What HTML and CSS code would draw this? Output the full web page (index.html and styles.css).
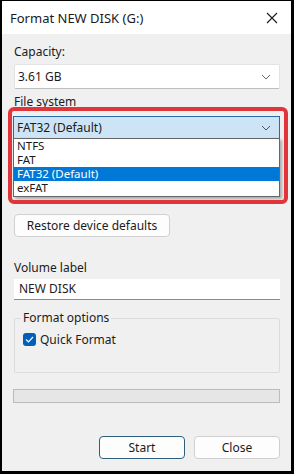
FILE: index.html
```html
<!DOCTYPE html>
<html>
<head>
  <link rel="stylesheet" href="styles.css">
</head>
<body>
  <div class="window">
    <div class="titlebar">
      <span class="title">Format NEW DISK (G:)</span>
      <svg class="close" width="12" height="12" viewBox="0 0 12 12">
        <path d="M1 1 L11 11 M11 1 L1 11" stroke="#1a1a1a" stroke-width="1.1" fill="none"/>
      </svg>
    </div>

    <div class="content">
      <label class="field-label capacity-label">Capacity:</label>
      <div class="select">
        <span>3.61 GB</span>
        <svg class="chevron" width="10" height="6" viewBox="0 0 10 6">
          <path d="M1 1 L5 5 L9 1" stroke="#666" stroke-width="1" fill="none"/>
        </svg>
      </div>

      <label class="field-label fs-label">File system</label>
      <div class="combo-wrap">
        <div class="select open">
          <span>FAT32 (Default)</span>
          <svg class="chevron" width="10" height="6" viewBox="0 0 10 6">
            <path d="M1 1 L5 5 L9 1" stroke="#555" stroke-width="1" fill="none"/>
          </svg>
        </div>
        <ul class="dropdown">
          <li>NTFS</li>
          <li>FAT</li>
          <li class="selected">FAT32 (Default)</li>
          <li>exFAT</li>
        </ul>
        <div class="highlight"></div>
      </div>

      <button class="btn restore">Restore device defaults</button>

      <label class="field-label volume-label">Volume label</label>
      <div class="textbox">NEW DISK</div>

      <fieldset class="group">
        <legend>Format options</legend>
        <label class="check">
          <span class="box">
            <svg width="9" height="7" viewBox="0 0 9 7">
              <path d="M1 3.5 L3.5 6 L8 1" stroke="#fff" stroke-width="1.2" fill="none"/>
            </svg>
          </span>
          Quick Format
        </label>
      </fieldset>

      <div class="progress"></div>

      <div class="actions">
        <button class="btn primary">Start</button>
        <button class="btn">Close</button>
      </div>
    </div>
  </div>
</body>
</html>
```
FILE: styles.css
```css
body {
  margin: 0;
  font-family: 'Noto Sans', 'Open Sans', sans-serif;
  font-size: 12px;
  color: #1b1b1b;
  background: #000;
}

.window {
  width: 289px;
  height: 470px;
  border-left: 2px solid #000;
  border-top: 1px solid #000;
  background: #f0f0f0;
  overflow: hidden;
}

.titlebar {
  height: 33px;
  background: #fff;
  display: flex;
  align-items: center;
  justify-content: space-between;
  padding: 0 13px 0 8px;
}

.title {
  font-size: 13px;
  color: #1a1a1a;
}

.content {
  padding: 0 11px 0 12px;
}

.field-label {
  display: block;
  height: 16px;
  line-height: 16px;
}

.capacity-label {
  margin-top: 10px;
  margin-bottom: 4px;
}

.select {
  height: 23px;
  background: #fff;
  border: 1px solid #e3e3e3;
  border-bottom-color: #bdbdbd;
  border-radius: 2px;
  display: flex;
  align-items: center;
  justify-content: space-between;
  padding: 0 8px 0 3px;
}

.fs-label {
  margin-top: 5px;
}

.combo-wrap {
  position: relative;
  margin-top: 6px;
}

.select.open {
  height: 21px;
  background: #cde4f7;
  border: 1px solid #2a6aa8;
  border-radius: 0;
  margin-left: -1px;
  padding-left: 3px;
}

.dropdown {
  position: absolute;
  left: -1px;
  right: 0;
  top: 22px;
  margin: 0;
  padding: 0 0 1px 0;
  list-style: none;
  background: #fff;
  border: 1px solid #666;
  box-shadow: 2px 2px 3px rgba(0, 0, 0, 0.3);
  z-index: 2;
}

.dropdown li {
  height: 14px;
  line-height: 14px;
  padding-left: 3px;
  font-size: 11.5px;
}

.dropdown li.selected {
  background: #0078d7;
  color: #fff;
}

.highlight {
  position: absolute;
  left: -6px;
  right: -8px;
  top: -9px;
  height: 89px;
  border: 4px solid #e0353b;
  border-radius: 6px;
  z-index: 3;
}

.btn {
  font-family: inherit;
  font-size: 12px;
  color: #1b1b1b;
  background: #fdfdfd;
  border: 1px solid #d0d0d0;
  border-radius: 4px;
  height: 23px;
  padding: 0;
}

.restore {
  margin-top: 75px;
  width: 156px;
  display: block;
}

.volume-label {
  margin-top: 23px;
  margin-bottom: 3px;
}

.textbox {
  height: 20px;
  line-height: 20px;
  background: #fff;
  border-bottom: 1px solid #8a8a8a;
  padding-left: 5px;
}

.group {
  margin: 11px 0 0 0;
  padding: 6px 8px 0 8px;
  height: 54px;
  border: 1px solid #dcdcdc;
  border-radius: 2px;
}

.group legend {
  padding: 0 2px;
  margin-left: -2px;
  line-height: 14px;
}

.check {
  display: flex;
  align-items: center;
  gap: 4px;
}

.box {
  width: 13px;
  height: 13px;
  border-radius: 3px;
  background: #005fb8;
  display: flex;
  align-items: center;
  justify-content: center;
}

.progress {
  margin-top: 16px;
  margin-left: -1px;
  height: 12px;
  background: #e6e6e6;
  border: 1px solid #bcbcbc;
}

.actions {
  margin-top: 33px;
  display: flex;
  justify-content: flex-end;
  gap: 9px;
}

.actions .btn {
  width: 86px;
}

.btn.primary {
  border-color: #2e5f7e;
}
```
